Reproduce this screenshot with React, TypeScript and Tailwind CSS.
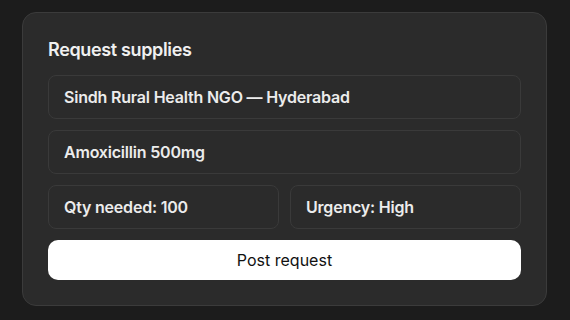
import React from "react";

function Field({ children, className = "" }: { children: React.ReactNode; className?: string }) {
  return (
    <div
      className={
        "h-[44px] flex items-center rounded-[8px] border border-[#3a3a3a] bg-[#2b2b2b] pl-[15px] text-[16px] font-semibold text-[#ececec] tracking-[-0.2px] " +
        className
      }
    >
      {children}
    </div>
  );
}

export default function App() {
  return (
    <div
      className="w-[570px] h-[320px] bg-[#1c1c1c] flex pl-[22px] pt-[12px]"
      style={{ fontFamily: "Inter, 'Noto Sans', sans-serif" }}
    >
      <div className="w-[525px] h-[294px] rounded-[14px] border border-[#3b3b3b] bg-[#2b2b2b] pl-[25px] pr-[25px] pt-[22px] flex flex-col">
        <div className="h-[28px] flex items-center text-[18px] font-semibold text-[#f0f0f0] tracking-[-0.35px]">
          Request supplies
        </div>
        <div className="mt-[12px] flex flex-col gap-[11px]">
          <Field>Sindh Rural Health NGO — Hyderabad</Field>
          <Field>Amoxicillin 500mg</Field>
          <div className="grid grid-cols-2 gap-[11px]">
            <Field>Qty needed: 100</Field>
            <Field>Urgency: High</Field>
          </div>
          <button className="h-[40px] rounded-[10px] bg-white text-[16px] text-[#111] font-normal">
            Post request
          </button>
        </div>
      </div>
    </div>
  );
}
